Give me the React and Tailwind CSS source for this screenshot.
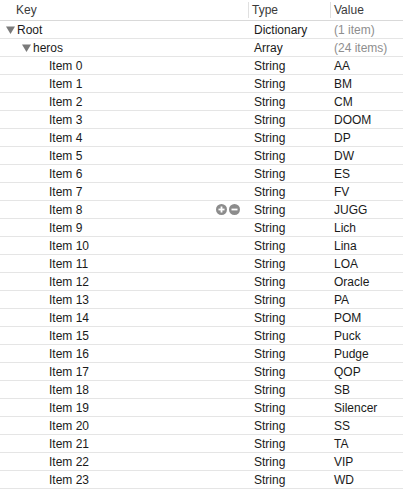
const items = ['AA', 'BM', 'CM', 'DOOM', 'DP', 'DW', 'ES', 'FV', 'JUGG', 'Lich', 'Lina', 'LOA', 'Oracle', 'PA', 'POM', 'Puck', 'Pudge', 'QOP', 'SB', 'Silencer', 'SS', 'TA', 'VIP', 'WD']

function Triangle() {
  return (
    <svg width="9" height="8" viewBox="0 0 9 8" className="mr-[2px] shrink-0">
      <path d="M0 0.5 L9 0.5 L4.5 8 Z" fill="#7a7a7a" />
    </svg>
  )
}

function CircleBtn({ plus }) {
  return (
    <svg width="11" height="11" viewBox="0 0 11 11">
      <circle cx="5.5" cy="5.5" r="5.5" fill="#8c8c8c" />
      <rect x="2.5" y="4.6" width="6" height="1.8" fill="#fff" />
      {plus ? <rect x="4.6" y="2.5" width="1.8" height="6" fill="#fff" /> : null}
    </svg>
  )
}

function Row({ indent, children, type, value, muted, actions }) {
  return (
    <div className="grid h-[18px] grid-cols-[248px_82px_1fr] items-center border-b border-[#e5e5e5] text-[12px] leading-none text-[#1a1a1a]">
      <div className="flex items-center justify-between pr-[8px]" style={{ paddingLeft: indent }}>
        <div className="flex items-center">{children}</div>
        {actions ? (
          <div className="flex items-center gap-[2px]">
            <CircleBtn plus />
            <CircleBtn />
          </div>
        ) : null}
      </div>
      <div className="pl-[6px]">{type}</div>
      <div className={muted ? 'pl-[4px] text-[#8e8e8e]' : 'pl-[4px]'}>{value}</div>
    </div>
  )
}

export default function App() {
  return (
    <div className="h-[502px] w-[403px] bg-white" style={{ fontFamily: '"Liberation Sans", Arial, sans-serif' }}>
      <div className="grid h-[21px] grid-cols-[248px_82px_1fr] items-center border-b border-[#d9d9d9] text-[12px] text-[#3a3a3a]">
        <div className="pl-[16px]">Key</div>
        <div className="flex h-[16px] items-center border-l border-[#e0e0e0] pl-[3px]">Type</div>
        <div className="flex h-[16px] items-center border-l border-[#e0e0e0] pl-[3px]">Value</div>
      </div>
      <Row indent={6} type="Dictionary" value="(1 item)" muted>
        <Triangle />
        <span>Root</span>
      </Row>
      <Row indent={22} type="Array" value="(24 items)" muted>
        <Triangle />
        <span>heros</span>
      </Row>
      {items.map((v, i) => (
        <Row key={v} indent={49} type="String" value={v} actions={i === 8}>
          <span>Item {i}</span>
        </Row>
      ))}
    </div>
  )
}
